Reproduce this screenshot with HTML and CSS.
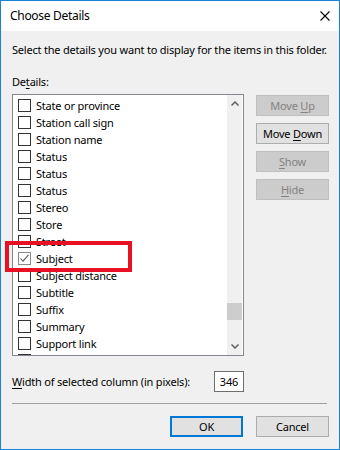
FILE: index.html
```html
<!DOCTYPE html>
<html>
<head>
<meta charset="utf-8">
<link rel="stylesheet" href="styles.css">
</head>
<body>
<div class="dialog">
  <div class="titlebar">
    <span class="title">Choose Details</span>
    <svg class="close" width="10" height="10" viewBox="0 0 10 10"><path d="M0.5 0.5L9.5 9.5M9.5 0.5L0.5 9.5" stroke="#000" stroke-width="1.1" fill="none"/></svg>
  </div>
  <div class="content">
    <div class="desc">Select the details you want to display for the items in this folder.</div>
    <div class="label">De<u>t</u>ails:</div>
    <div class="main">
      <div class="list">
        <div class="items">
          <div class="row"><span class="cb"></span><span>State or province</span></div>
          <div class="row"><span class="cb"></span><span>Station call sign</span></div>
          <div class="row"><span class="cb"></span><span>Station name</span></div>
          <div class="row"><span class="cb"></span><span>Status</span></div>
          <div class="row"><span class="cb"></span><span>Status</span></div>
          <div class="row"><span class="cb"></span><span>Status</span></div>
          <div class="row"><span class="cb"></span><span>Stereo</span></div>
          <div class="row"><span class="cb"></span><span>Store</span></div>
          <div class="row"><span class="cb"></span><span>Street</span></div>
          <div class="row"><span class="cb checked"><svg width="11" height="11" viewBox="0 0 11 11"><path d="M1.5 5.5L4 8.2L9.5 1.8" stroke="#5a5a5a" stroke-width="1.1" fill="none"/></svg></span><span>Subject</span></div>
          <div class="row"><span class="cb"></span><span>Subject distance</span></div>
          <div class="row"><span class="cb"></span><span>Subtitle</span></div>
          <div class="row"><span class="cb"></span><span>Suffix</span></div>
          <div class="row"><span class="cb"></span><span>Summary</span></div>
          <div class="row"><span class="cb"></span><span>Support link</span></div>
          <div class="row"><span class="cb"></span></div>
        </div>
        <div class="scrollbar">
          <div class="arrow"><svg width="8" height="5" viewBox="0 0 8 5"><path d="M0.5 4.5L4 1L7.5 4.5" stroke="#606060" stroke-width="1.5" fill="none"/></svg></div>
          <div class="track"><div class="thumb"></div></div>
          <div class="arrow"><svg width="8" height="5" viewBox="0 0 8 5"><path d="M0.5 0.5L4 4L7.5 0.5" stroke="#606060" stroke-width="1.5" fill="none"/></svg></div>
        </div>
      </div>
      <div class="side">
        <div class="btn disabled"><span>Move <u>U</u>p</span></div>
        <div class="btn"><span>Move <u>D</u>own</span></div>
        <div class="btn disabled"><span><u>S</u>how</span></div>
        <div class="btn disabled"><span><u>H</u>ide</span></div>
      </div>
    </div>
    <div class="widthrow">
      <span><u>W</u>idth of selected column (in pixels):</span>
      <div class="input">346</div>
    </div>
    <div class="sep"></div>
    <div class="footer">
      <div class="btn default"><span>OK</span></div>
      <div class="btn"><span>Cancel</span></div>
    </div>
  </div>
  <div class="highlight"></div>
</div>
</body>
</html>
```
FILE: styles.css
```css
* { box-sizing: border-box; }
html, body { margin: 0; padding: 0; }
body {
  width: 340px;
  height: 450px;
  font-family: "Noto Sans", sans-serif;
  font-size: 11px;
  letter-spacing: -0.2px;
  color: #000;
  background: #fff;
}
u { text-underline-offset: 2px; }
.dialog {
  position: relative;
  width: 340px;
  height: 450px;
  border: 1px solid #1883d7;
  background: #f0f0f0;
  display: flex;
  flex-direction: column;
}
.titlebar {
  height: 30px;
  flex: none;
  background: #fff;
  display: flex;
  align-items: center;
  justify-content: space-between;
  padding: 0 9px 0 9px;
}
.title { line-height: 16px; font-size: 12px; letter-spacing: -0.3px; }
.close { display: block; }
.content {
  padding: 0 10px 0 11px;
  display: flex;
  flex-direction: column;
}
.desc { margin-top: 11px; line-height: 16px; white-space: nowrap; }
.label { margin-top: 16px; line-height: 16px; margin-bottom: 4px; }
.main { display: flex; height: 262px; }
.list {
  width: 232px;
  height: 262px;
  border: 1px solid #828790;
  background: #fff;
  display: flex;
  overflow: hidden;
}
.items {
  flex: 1;
  padding: 2px 0 0 5px;
  overflow: hidden;
}
.row {
  height: 17px;
  display: flex;
  align-items: center;
  gap: 5px;
  line-height: 16px;
  white-space: nowrap;
}
.cb {
  width: 13px;
  height: 13px;
  flex: none;
  border: 1px solid #333;
  background: #fff;
  display: flex;
  align-items: center;
  justify-content: center;
}
.cb.checked { border-color: #8a8a8a; }
.cb svg { display: block; }
.scrollbar {
  width: 15px;
  margin-right: 1px;
  background: #f0f0f0;
  display: flex;
  flex-direction: column;
}
.arrow {
  height: 17px;
  display: flex;
  align-items: center;
  justify-content: center;
}
.arrow svg { display: block; }
.track { flex: 1; }
.thumb { margin-top: 191px; height: 17px; background: #cdcdcd; }
.side {
  margin-left: 12px;
  padding-top: 1px;
  display: flex;
  flex-direction: column;
  gap: 7px;
}
.btn {
  width: 73px;
  height: 21px;
  border: 1px solid #adadad;
  background: #e1e1e1;
  display: flex;
  align-items: center;
  justify-content: center;
  line-height: 16px;
  white-space: nowrap;
}
.btn.disabled {
  background: #cccccc;
  border-color: #bfbfbf;
  color: #838383;
}
.btn.default { border: 2px solid #0078d7; }
.widthrow {
  margin-top: 15px;
  width: 232px;
  height: 21px;
  display: flex;
  align-items: center;
  justify-content: space-between;
  line-height: 16px;
  white-space: nowrap;
}
.input {
  width: 30px;
  height: 21px;
  border: 1px solid #6e6e6e;
  background: #fff;
  display: flex;
  align-items: center;
  justify-content: center;
}
.sep {
  margin-top: 11px;
  width: 315px;
  height: 1px;
  background: #a0a0a0;
}
.footer {
  margin-top: 12px;
  display: flex;
  justify-content: flex-end;
  gap: 13px;
}
.highlight {
  position: absolute;
  left: 4px;
  top: 240px;
  width: 127px;
  height: 31px;
  border: 4px solid #e81123;
}
```
